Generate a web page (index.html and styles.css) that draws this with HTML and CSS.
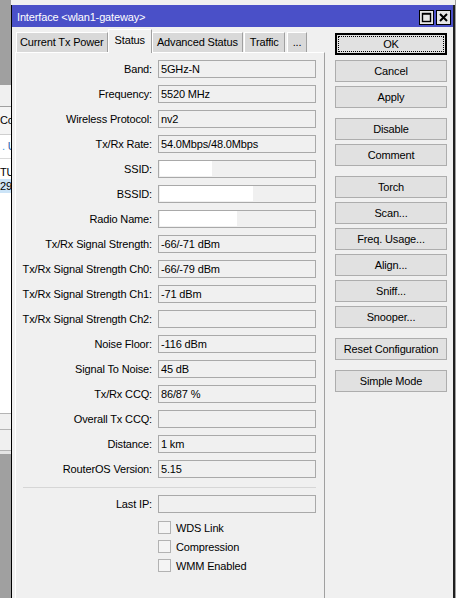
FILE: index.html
```html
<!DOCTYPE html>
<html lang="en">
<head>
    <meta charset="UTF-8">
    <meta name="viewport" content="width=device-width, initial-scale=1.0">
    <title>Interface &lt;wlan1-gateway&gt;</title>
    <link rel="stylesheet" href="styles.css">
</head>
<body>
    <div class="desk">
        <!-- window behind the dialog, only its right edge shows -->
        <div class="behind">
            <div class="bh-gray"></div>
            <div class="bh-tool"></div>
            <div class="bh-head">Cor</div>
            <div class="bh-row"><span class="bh-dot">.</span> U</div>
            <div class="bh-list">
                <div class="bh-line">TU</div>
                <div class="bh-line bh-sel">29</div>
            </div>
            <div class="bh-foot"></div>
            <div class="bh-foot tall"></div>
            <div class="bh-foot thin"></div>
            <div class="bh-gray bh-fill"></div>
        </div>

        <div class="win-col">
            <div class="win-top"></div>
            <div class="window">
                <div class="titlebar">
                    <span class="title">Interface &lt;wlan1-gateway&gt;</span>
                    <div class="tb-btns">
                        <span class="tb-btn">
                            <svg width="11" height="11" viewBox="0 0 11 11"><rect x="1.5" y="1.5" width="8" height="8" fill="none" stroke="#000" stroke-width="1.4"/><line x1="1" y1="2" x2="10" y2="2" stroke="#000" stroke-width="1.4"/></svg>
                        </span>
                        <span class="tb-btn">
                            <svg width="11" height="11" viewBox="0 0 11 11"><path d="M2 2 L9 9 M9 2 L2 9" stroke="#000" stroke-width="2" fill="none"/></svg>
                        </span>
                    </div>
                </div>

                <div class="win-body">
                    <div class="left">
                        <div class="tabs">
                            <div class="tab tight">Current Tx Power</div>
                            <div class="tab active">Status</div>
                            <div class="tab">Advanced Status</div>
                            <div class="tab wide">Traffic</div>
                            <div class="tab wide">...</div>
                        </div>
                        <div class="panel">
                            <div class="form">
                                <label class="lbl">Band:</label><div class="field">5GHz-N</div>
                                <label class="lbl">Frequency:</label><div class="field">5520 MHz</div>
                                <label class="lbl">Wireless Protocol:</label><div class="field">nv2</div>
                                <label class="lbl">Tx/Rx Rate:</label><div class="field">54.0Mbps/48.0Mbps</div>
                                <label class="lbl">SSID:</label><div class="field"><span class="blank w-ssid"></span></div>
                                <label class="lbl">BSSID:</label><div class="field"><span class="blank w-bssid"></span></div>
                                <label class="lbl">Radio Name:</label><div class="field"><span class="blank w-radio"></span></div>
                                <label class="lbl">Tx/Rx Signal Strength:</label><div class="field">-66/-71 dBm</div>
                                <label class="lbl">Tx/Rx Signal Strength Ch0:</label><div class="field">-66/-79 dBm</div>
                                <label class="lbl">Tx/Rx Signal Strength Ch1:</label><div class="field">-71 dBm</div>
                                <label class="lbl">Tx/Rx Signal Strength Ch2:</label><div class="field"></div>
                                <label class="lbl">Noise Floor:</label><div class="field">-116 dBm</div>
                                <label class="lbl">Signal To Noise:</label><div class="field">45 dB</div>
                                <label class="lbl">Tx/Rx CCQ:</label><div class="field">86/87 %</div>
                                <label class="lbl">Overall Tx CCQ:</label><div class="field"></div>
                                <label class="lbl">Distance:</label><div class="field">1 km</div>
                                <label class="lbl">RouterOS Version:</label><div class="field">5.15</div>
                                <div class="sep"></div>
                                <label class="lbl">Last IP:</label><div class="field"></div>
                                <div class="checks">
                                    <div class="check"><span class="box"></span>WDS Link</div>
                                    <div class="check"><span class="box"></span>Compression</div>
                                    <div class="check"><span class="box"></span>WMM Enabled</div>
                                </div>
                            </div>
                        </div>
                    </div>

                    <div class="buttons">
                        <button class="btn default">OK</button>
                        <button class="btn">Cancel</button>
                        <button class="btn">Apply</button>
                        <button class="btn group">Disable</button>
                        <button class="btn">Comment</button>
                        <button class="btn group">Torch</button>
                        <button class="btn">Scan...</button>
                        <button class="btn">Freq. Usage...</button>
                        <button class="btn">Align...</button>
                        <button class="btn">Sniff...</button>
                        <button class="btn">Snooper...</button>
                        <button class="btn group">Reset Configuration</button>
                        <button class="btn group">Simple Mode</button>
                    </div>
                </div>
            </div>
        </div>
    </div>
</body>
</html>
```

FILE: styles.css
```css
* { box-sizing: border-box; }
body { margin: 0; width: 456px; height: 598px; overflow: hidden; background: #a0a0a0; font: 11px "Liberation Sans", Arial, sans-serif; letter-spacing: -0.15px; color: #000; }
.desk { display: flex; height: 598px; }

/* background window */
.behind { width: 11px; flex-shrink: 0; overflow: hidden; display: flex; flex-direction: column; white-space: nowrap; }
.bh-gray { height: 85px; flex-shrink: 0; background: #a0a0a0; }
.bh-tool { height: 22px; flex-shrink: 0; background: #f0f0f0; border-bottom: 1px solid #a0a0a0; }
.bh-head { height: 28px; flex-shrink: 0; line-height: 27px; background: #f4f4f4; border-bottom: 1px solid #cfcfcf; }
.bh-row { height: 24px; flex-shrink: 0; line-height: 23px; background: #fff; border-bottom: 1px solid #dadada; padding-left: 2px; color: #2a5ea8; }
.bh-dot { color: #3c9be0; }
.bh-list { height: 254px; flex-shrink: 0; background: #fff; padding-top: 6px; }
.bh-line { height: 14px; line-height: 14px; }
.bh-sel { background: #cce4f7; }
.bh-foot { height: 16px; flex-shrink: 0; background: #f0f0f0; border-top: 1px solid #b4b4b4; }
.bh-foot.tall { height: 21px; }
.bh-foot.thin { height: 4px; background: #e4e4e4; }
.bh-fill { flex: 1; }

/* dialog */
.win-col { flex: 1; display: flex; flex-direction: column; margin-right: 1px; }
.win-top { height: 5px; background: #f0f0f0; }
.window { flex: 1; display: flex; flex-direction: column; background: #f0f0f0; border-left: 1px solid #000; border-right: 2px solid #202020; }
.titlebar { height: 22px; flex-shrink: 0; background: #4a50c8; color: #fff; display: flex; align-items: center; justify-content: space-between; padding: 2px 2px 0 5px; }
.tb-btns { display: flex; gap: 2px; }
.tb-btn { width: 15px; height: 15px; border: 1px solid #000; background: #e6e6e6; display: flex; align-items: center; justify-content: center; }

.win-body { flex: 1; display: flex; gap: 10px; padding: 2px 6px 0 3px; min-height: 0; }
.left { width: 310px; display: flex; flex-direction: column; }

.tabs { display: flex; align-items: flex-end; height: 23px; padding-left: 1px; }
.tab { height: 20px; line-height: 18px; padding: 0 4px; margin-right: 1px; background: #d9d9d9; border: 1px solid; border-color: #fff #a0a0a0 transparent #fff; border-bottom: 0; white-space: nowrap; }
.tab.tight { padding: 0 3px; }
.tab.wide { padding: 0 5px; margin-right: 2px; }
.tab.active { position: relative; height: 24px; margin: 0 0 -1px -1px; line-height: 21px; padding: 0 6px; background: #f0f0f0; }

.panel { flex: 1; border-top: 1px solid #fff; border-left: 1px solid #fff; border-right: 1px solid #a0a0a0; padding: 7px 8px 0 0; }
.form { display: grid; grid-template-columns: 136px 158px; column-gap: 6px; row-gap: 7px; }
.lbl { height: 18px; display: flex; align-items: center; justify-content: flex-end; white-space: nowrap; }
.field { height: 18px; border: 1px solid #a9a9a9; padding: 0 2px; line-height: 16px; white-space: nowrap; overflow: hidden; }
.blank { display: block; height: 15px; margin-left: -1px; background: #fff; }
.w-ssid { width: 52px; }
.w-bssid { width: 93px; }
.w-radio { width: 77px; }
.sep { grid-column: 1 / -1; height: 1px; margin: 2px 0 0 7px; background: #d6d6d6; }
.checks { grid-column: 2; display: flex; flex-direction: column; gap: 6px; margin-top: 1px; }
.check { height: 13px; display: flex; align-items: center; gap: 5px; white-space: nowrap; }
.box { width: 13px; height: 13px; border: 1px solid #b2b2b2; background: #f4f4f4; }

/* button column */
.buttons { width: 112px; flex-shrink: 0; display: flex; flex-direction: column; gap: 4px; padding-top: 4px; }
.btn { height: 22px; flex-shrink: 0; padding: 0; border: 1px solid #adadad; background: #e1e1e1; font: inherit; letter-spacing: inherit; color: #000; text-align: center; }
.btn.default { border: 1px solid #000; box-shadow: inset 0 0 0 1px #000; outline: 1px dotted #000; outline-offset: -4px; margin-bottom: 1px; }
.btn.group { margin-top: 6px; }
```
